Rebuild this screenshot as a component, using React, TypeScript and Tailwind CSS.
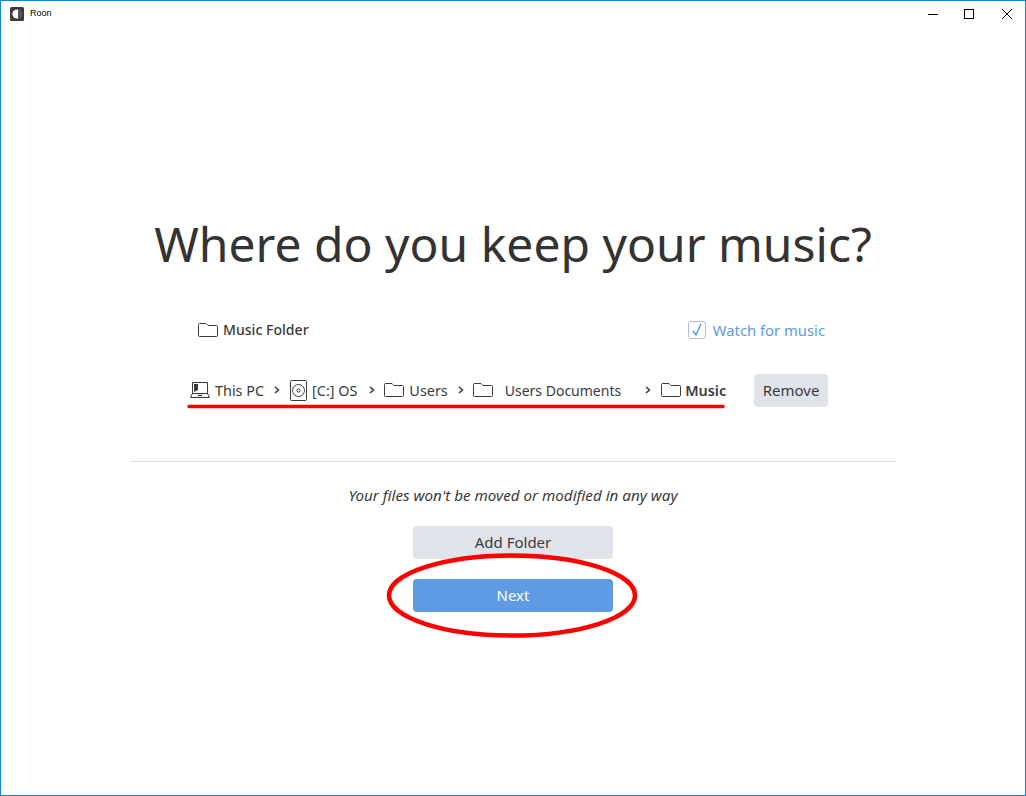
const FolderIcon = ({ className = "" }: { className?: string }) => (
  <svg viewBox="0 0 20 16" className={`w-5 h-4 shrink-0 ${className}`} fill="none" stroke="#3a3a3a" strokeWidth="1">
    <path d="M0.5 3.5V13.5A1 1 0 0 0 1.5 14.5H18.5A1 1 0 0 0 19.5 13.5V4.5A1 1 0 0 0 18.5 3.5H10L8 1.5H1.5A1 1 0 0 0 0.5 2.5Z" />
  </svg>
);

const LaptopIcon = () => (
  <svg viewBox="0 0 20 18" className="w-5 h-[18px] shrink-0" fill="none" stroke="#3a3a3a" strokeWidth="1">
    <path d="M2.5 12.5V1.5H17.5V12.5" />
    <path d="M2.5 12.5L0.5 16.5H19.5L17.5 12.5Z" />
    <path d="M4 3H8V9L4 11Z" fill="#3a3a3a" stroke="none" />
    <path d="M8 14.5H12" strokeWidth="1.4" />
  </svg>
);

const DiskIcon = () => (
  <svg viewBox="0 0 17 21" className="w-[17px] h-[21px] shrink-0" fill="none" stroke="#3a3a3a" strokeWidth="1">
    <rect x="0.5" y="0.5" width="16" height="20" rx="1" />
    <circle cx="8.5" cy="10.5" r="6" />
    <circle cx="8.5" cy="10.5" r="1.6" />
  </svg>
);

const Chevron = () => (
  <svg viewBox="0 0 6 8" className="w-1.5 h-2 shrink-0" fill="none" stroke="#3a3a3a" strokeWidth="1.6">
    <path d="M1 1L4.5 4L1 7" />
  </svg>
);

export default function App() {
  return (
    <div className="relative h-[796px] w-[1026px] overflow-hidden border border-[#0f82d8] bg-white font-['Noto_Sans',sans-serif] text-[#3a3a3a]">
      {/* window title bar */}
      <div className="flex h-[26px] items-center justify-between">
        <div className="flex items-center pl-[9px]">
          <svg viewBox="0 0 14 14" className="h-3.5 w-3.5">
            <rect width="14" height="14" rx="1.5" fill="#3b3b40" />
            <circle cx="7" cy="7" r="4.6" fill="#fff" />
            <path d="M8 2.4A4.6 4.6 0 0 1 8 11.6Z" fill="#55555a" />
          </svg>
          <span className="ml-[6px] font-['Liberation_Sans',sans-serif] text-[9px] text-black">Roon</span>
        </div>
        <div className="flex items-center gap-[26px] pr-[13px]">
          <svg viewBox="0 0 10 10" className="h-2.5 w-2.5" stroke="#000" strokeWidth="1"><path d="M0 5.5H10" /></svg>
          <svg viewBox="0 0 10 10" className="h-2.5 w-2.5" fill="none" stroke="#000" strokeWidth="1"><rect x="0.5" y="0.5" width="9" height="9" /></svg>
          <svg viewBox="0 0 10 10" className="ml-[2px] h-2.5 w-2.5" fill="none" stroke="#000" strokeWidth="1"><path d="M0 0L10 10M10 0L0 10" /></svg>
        </div>
      </div>

      <div className="flex flex-col items-center">
        <h1 className="mt-[179px] text-center text-[48px] leading-[76px] font-normal tracking-normal text-[#333]">
          Where do you keep your music?
        </h1>

        <div className="mt-[31px] flex h-[34px] w-[630px] items-center justify-between pr-[3px]">
          <div className="flex items-center gap-[5px]">
            <FolderIcon />
            <span className="text-[14.1px] font-medium">Music Folder</span>
          </div>
          <div className="flex items-center gap-[7px]">
            <span className="flex h-[18px] w-[18px] items-center justify-center rounded-[3px] border border-[#b5bccb]">
              <svg viewBox="0 0 12 14" className="h-3.5 w-3" fill="none" stroke="#4a98e8" strokeWidth="1.4"><path d="M2 8L5 12L10 1" /></svg>
            </span>
            <span className="text-[14.8px] text-[#5b9be3]">Watch for music</span>
          </div>
        </div>

        <div className="mt-[26px] flex h-[34px] w-[646px] items-center">
          <LaptopIcon />
          <span className="mt-[2px] ml-[5px] text-[14.4px]">This PC</span>
          <span className="ml-[10px]"><Chevron /></span>
          <span className="ml-[10px]"><DiskIcon /></span>
          <span className="mt-[2px] ml-[5px] text-[14.4px]">[C:] OS</span>
          <span className="ml-[12px]"><Chevron /></span>
          <span className="ml-[9px]"><FolderIcon /></span>
          <span className="mt-[2px] ml-[5px] text-[14.4px]">Users</span>
          <span className="ml-[10px]"><Chevron /></span>
          <span className="ml-[9px]"><FolderIcon /></span>
          <span className="mt-[2px] ml-[12px] text-sm">Users Documents</span>
          <span className="ml-[24px]"><Chevron /></span>
          <span className="ml-[10px]"><FolderIcon /></span>
          <span className="mt-[2px] ml-[4px] text-[14.4px] font-semibold">Music</span>
          <button className="ml-[28px] h-[33px] w-[74px] rounded-[4px] bg-[#e0e3ea] text-[15px]">Remove</button>
        </div>

        <div className="mt-[54px] h-px w-[766px] bg-[#dcdcdc]" />

        <p className="mt-[22px] text-[15.2px] italic text-[#3a3a3a]">Your files won't be moved or modified in any way</p>

        <button className="mt-[19px] h-[33px] w-[200px] rounded-[4px] bg-[#e0e3ea] text-[15px]">Add Folder</button>
        <button className="mt-5 h-[33px] w-[200px] rounded-[4px] bg-[#5e9be2] text-[15px] text-white">Next</button>
      </div>

      {/* red marker annotations drawn over the page */}
      <svg className="pointer-events-none absolute top-[-1px] left-[-1px]" width="1026" height="796" fill="none" stroke="#f00">
        <path d="M189 406.5H723" strokeWidth="3.5" strokeLinecap="round" />
        <ellipse cx="512" cy="595.5" rx="123" ry="40" strokeWidth="4.5" />
      </svg>
    </div>
  );
}
